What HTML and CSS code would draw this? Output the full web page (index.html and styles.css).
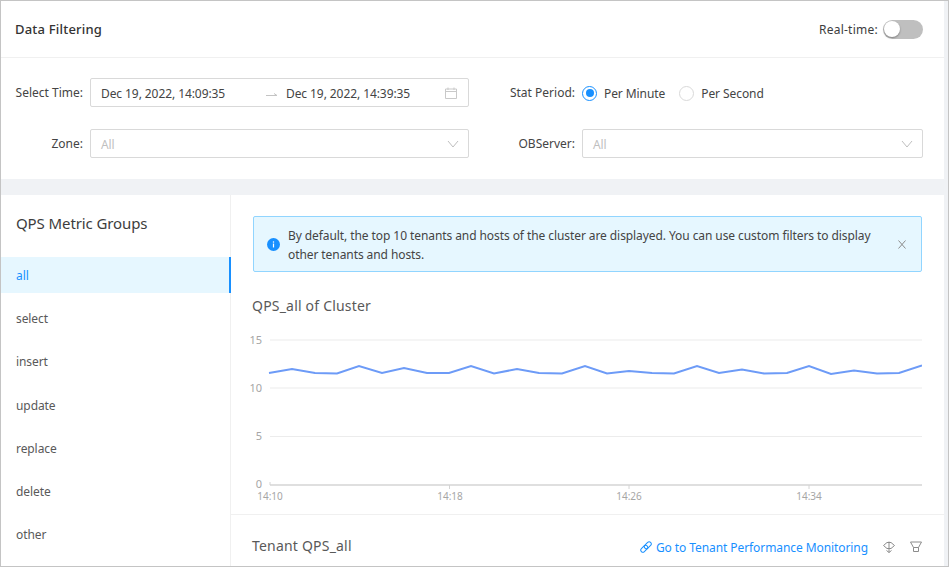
FILE: index.html
```html
<!DOCTYPE html>
<html lang="en">
<head>
<meta charset="utf-8">
<title>Data Filtering</title>
<link rel="stylesheet" href="styles.css">
</head>
<body>
<div class="frame">
  <section class="filter-card">
    <header class="filter-head">
      <h2>Data Filtering</h2>
      <div class="realtime"><span>Real-time:</span><span class="switch"><span class="knob"></span></span></div>
    </header>
    <div class="filter-form">
      <div class="field left">
        <label>Select Time:</label>
        <div class="input range">
          <span class="date">Dec 19, 2022, 14:09:35</span>
          <svg class="arrow" width="12" height="8" viewBox="0 0 12 8"><path d="M0 5.500H11L8 3.500" fill="none" stroke="#c4c4c4"/></svg>
          <span class="date end">Dec 19, 2022, 14:39:35</span>
          <svg class="cal" width="12" height="12" viewBox="0 0 12 12"><path d="M.5 2h11v9.500H.5zM.5 4.500h11M3 .5V3M9 .5V3" fill="none" stroke="#c9c9c9"/></svg>
        </div>
      </div>
      <div class="field right">
        <label>Stat Period:</label>
        <div class="radios">
          <span class="radio on"><i></i>Per Minute</span>
          <span class="radio"><i></i>Per Second</span>
        </div>
      </div>
      <div class="field left">
        <label>Zone:</label>
        <div class="input select"><span>All</span>
          <svg width="12" height="8" viewBox="0 0 12 8"><path d="M1 1l5 6 5-6" fill="none" stroke="#bfbfbf"/></svg></div>
      </div>
      <div class="field right">
        <label>OBServer:</label>
        <div class="input select"><span>All</span>
          <svg width="12" height="8" viewBox="0 0 12 8"><path d="M1 1l5 6 5-6" fill="none" stroke="#bfbfbf"/></svg></div>
      </div>
    </div>
  </section>
  <section class="metrics">
    <aside class="side">
      <h3>QPS Metric Groups</h3>
      <ul>
        <li class="active">all</li>
        <li>select</li>
        <li>insert</li>
        <li>update</li>
        <li>replace</li>
        <li>delete</li>
        <li>other</li>
      </ul>
    </aside>
    <main class="content">
      <div class="chart-area">
        <div class="alert">
          <svg class="info" width="13" height="13" viewBox="0 0 14 14"><circle cx="7" cy="7" r="7" fill="#1890ff"/><path d="M7 6v4.200" stroke="#fff" stroke-width="1.300"/><circle cx="7" cy="4.200" r=".8" fill="#fff"/></svg>
          <p>By default, the top 10 tenants and hosts of the cluster are displayed. You can use custom filters to display other tenants and hosts.</p>
          <svg class="close" width="8" height="9" viewBox="0 0 8 9"><path d="M.5.5l7 8M7.500.5l-7 8" stroke="#8c8c8c" fill="none"/></svg>
        </div>
        <h4>QPS_all of Cluster</h4>
        <svg class="chart" width="692" height="176" viewBox="0 0 692 176">
          <g stroke="#ececec" stroke-width="1.200">
            <path d="M40 11H692M40 59H692M40 107.500H692"/>
          </g>
          <path d="M40 156H692" stroke="#d4d4d4" stroke-width="1.600"/>
          <path d="M40 156v-3M219.500 156v4M399 156v4M579 156v4" stroke="#d4d4d4"/>
          <polyline fill="none" stroke="#6d9bf7" stroke-width="2" points="39,44 62,40 85,44 107,44.500 129,37 152,44 174,39 197,44 219,44 241,37 264,44.500 287,40 309,44 332,44.500 355,37 377,44.500 399,42 422,44 444,44.500 467,37 489,44 512,40.500 534,44.500 557,44 579,37 601,45 624,41.500 647,44.500 669,44 692,36.500" />
          <g class="tick y">
            <text x="32" y="15">15</text>
            <text x="32" y="63">10</text>
            <text x="32" y="111">5</text>
            <text x="32" y="159">0</text>
          </g>
          <g class="tick x">
            <text x="40" y="171">14:10</text>
            <text x="220" y="171">14:18</text>
            <text x="399" y="171">14:26</text>
            <text x="579" y="171">14:34</text>
          </g>
        </svg>
      </div>
      <div class="tenant-row">
        <h4>Tenant QPS_all</h4>
        <div class="tools">
          <a class="link">
            <svg width="12" height="12" viewBox="0 0 12 12"><g transform="rotate(-45 6 6)" fill="none" stroke="#1890ff"><rect x="-.5" y="3.900" width="8" height="4.200" rx="2.100"/><rect x="4.500" y="3.900" width="8" height="4.200" rx="2.100"/></g></svg>
            Go to Tenant Performance Monitoring</a>
          <svg class="tool" width="12" height="12" viewBox="0 0 12 12"><path d="M6 .5V11.500M3.500 9.500l2.500 2 2.500-2M.5 4.500L4 1.500H8L11.500 4.500 8 7.500H4Z" fill="none" stroke="#8c8c8c"/></svg>
          <svg class="tool filter" width="12" height="12" viewBox="0 0 12 12"><path d="M.5 1h11L8.500 6.500v4h-5v-4zM3.500 6.500h5" fill="none" stroke="#8c8c8c"/></svg>
        </div>
      </div>
    </main>
  </section>
</div>
</body>
</html>
```
FILE: styles.css
```css
* { box-sizing: border-box; }
html, body { margin: 0; padding: 0; height: 100%; overflow: hidden; }
body { font-family: "Noto Sans", sans-serif; font-size: 12px; letter-spacing: -.08px; color: #3d3d3d; background: #fff; }
h2, h3, h4, p, ul { margin: 0; padding: 0; }

.frame {
  width: 949px; height: 567px;
  background: #f0f2f5;
  border: 1px solid #c4c4c4;
  padding-right: 4px;
  display: flex; flex-direction: column;
  overflow: hidden;
}

.filter-card { background: #fff; height: 178px; flex: none; }
.filter-head {
  height: 57px; padding: 0 21px 0 14px;
  display: flex; align-items: center; justify-content: space-between;
  border-bottom: 1px solid #f0f0f0;
}
.filter-head h2 { font-size: 13px; font-weight: 500; color: #333; letter-spacing: .2px; }
.realtime { display: flex; align-items: center; gap: 5px; letter-spacing: .25px; }
.switch { width: 40px; height: 19px; border-radius: 10px; background: #bfbfbf; padding: 2px; display: block; }
.knob { display: block; width: 16px; height: 16px; border-radius: 50%; background: #fff; box-shadow: 0 1px 2px rgba(0,0,0,.35); margin-top: -.5px; margin-left: -1px; }

.filter-form {
  padding: 20px 21px 0 0;
  display: grid;
  grid-template-columns: 468px 1fr;
  grid-auto-rows: 29px;
  row-gap: 22px;
}
.field { display: flex; align-items: center; gap: 7px; }
.field label { text-align: right; flex: none; color: #444; letter-spacing: 0; }
.field.left label { width: 82px; }
.field.right label { width: 106px; }
.input {
  flex: 1; min-width: 0; height: 29px;
  border: 1px solid #d9d9d9; border-radius: 2px;
  padding: 1px 11px 0 10px;
  display: flex; align-items: center;
}
.range .date { color: #444; width: 163px; flex: none; }
.range .date.end { width: auto; }
.range .arrow { margin: 2px 8px 0 2px; flex: none; }
.range .cal { margin-left: auto; flex: none; }
.select { justify-content: space-between; padding-right: 9px; }
.select span { color: #bfbfbf; }
.radios { display: flex; gap: 14px; height: 29px; align-items: center; padding-top: 1px; }
.radio { display: flex; align-items: center; gap: 7px; color: #444; }
.radio i {
  width: 15px; height: 15px; border-radius: 50%; border: 1px solid #d9d9d9; background: #fff;
  display: flex; align-items: center; justify-content: center;
}
.radio.on i { border-color: #1890ff; }
.radio.on i::after { content: ""; width: 8px; height: 8px; border-radius: 50%; background: #1890ff; }

.metrics {
  margin-top: 16px; flex: 1; min-height: 0;
  background: #fff; display: flex;
}
.side { width: 230px; flex: none; border-right: 1px solid #f0f0f0; }
.side h3 { font-size: 15px; font-weight: 400; letter-spacing: -.1px; color: #3d3d3d; padding: 18px 0 0 15px; height: 62px; line-height: 21px; }
.side ul { list-style: none; }
.side li { height: 36px; line-height: 38px; padding-left: 15px; margin-bottom: 7.200px; margin-right: -1px; color: #595959; position: relative; }
.side li.active { background: #e6f7ff; color: #1890ff; box-shadow: inset -2px 0 0 #1890ff; }

.content { flex: 1; min-width: 0; display: flex; flex-direction: column; }
.chart-area { padding: 21px 22px 0 22px; height: 320px; border-bottom: 1px solid #f0f0f0; }
.alert {
  height: 56px; width: 669px;
  background: #e6f7ff; border: 1px solid #91d5ff; border-radius: 2px;
  padding: 0 15px 0 13px;
  display: flex; align-items: center; gap: 7px;
}
.alert p { flex: 1; line-height: 19px; color: #444; padding-top: 1px; }
.alert .info { flex: none; margin-right: 1px; }
.alert .close { flex: none; margin-left: 6px; }
.chart-area h4 { font-size: 14px; font-weight: 400; letter-spacing: .2px; color: #595959; line-height: 20px; margin: 24px 0 0 -1px; }
.chart { display: block; margin: 13px 0 0 -23px; }
.tick text { font-size: 10px; letter-spacing: 0; fill: #a6a6a6; font-family: "Noto Sans", sans-serif; }
.tick.y text { font-size: 11px; text-anchor: end; }
.tick.x text { text-anchor: middle; }

.tenant-row {
  flex: 1; padding: 21px 22px 0 21px;
  display: flex; justify-content: space-between; align-items: flex-start;
}
.tenant-row h4 { font-size: 14px; font-weight: 400; letter-spacing: .2px; color: #595959; line-height: 20px; }
.tools { display: flex; align-items: center; height: 22px; }
.link { color: #1890ff; display: flex; align-items: center; gap: 4px; }
.tool { margin-left: 15px; }
```
